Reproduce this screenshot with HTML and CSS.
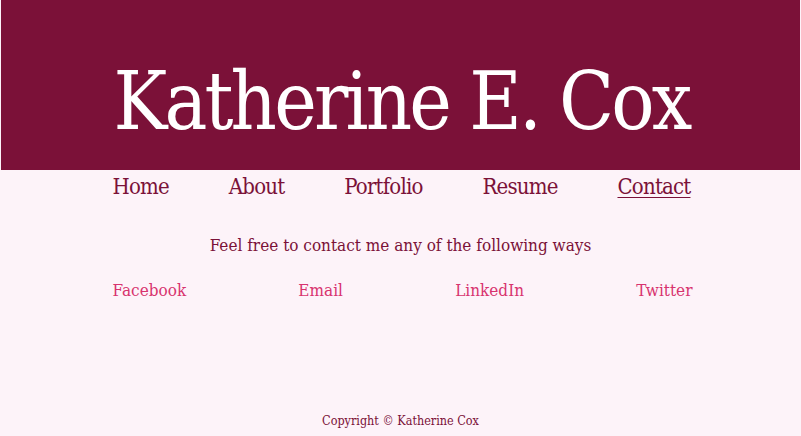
FILE: index.html
```html
<!DOCTYPE html>
<html lang="en">
<head>
<meta charset="utf-8">
<title>Contact - Katherine E. Cox</title>
<link rel="stylesheet" href="styles.css">
</head>
<body>
<header class="banner">
  <h1 class="name">Katherine E. Cox</h1>
</header>
<nav class="nav">
  <a href="#" class="nav-link">Home</a>
  <a href="#" class="nav-link">About</a>
  <a href="#" class="nav-link">Portfolio</a>
  <a href="#" class="nav-link">Resume</a>
  <a href="#" class="nav-link current">Contact</a>
</nav>
<main class="content">
  <p class="intro">Feel free to contact me any of the following ways</p>
  <div class="ways">
    <a href="#" class="way">Facebook</a>
    <a href="#" class="way">Email</a>
    <a href="#" class="way">LinkedIn</a>
    <a href="#" class="way">Twitter</a>
  </div>
</main>
<footer class="footer">Copyright © Katherine Cox</footer>
</body>
</html>
```
FILE: styles.css
```css
html, body {
  margin: 0;
  padding: 0;
}
body {
  background: #fdf3f9;
  color: #7b1138;
  font-family: "DejaVu Serif", serif;
  font-stretch: condensed;
  width: 801px;
  height: 436px;
  display: flex;
  flex-direction: column;
  overflow: hidden;
}
.banner {
  background: #7b1138;
  margin: 0 1px;
  height: 170px;
  display: flex;
  align-items: flex-end;
  justify-content: center;
}
.name {
  margin: 0 0 28px 2px;
  color: #fff;
  font-weight: normal;
  font-size: 80px;
  line-height: 1;
  letter-spacing: -2.8px;
}
.nav {
  width: 578px;
  margin: 0 auto;
  padding: 4px 0 0 2px;
  display: flex;
  justify-content: space-between;
}
.nav-link {
  color: #7b1138;
  text-decoration: none;
  font-size: 22px;
  letter-spacing: -0.8px;
}
.nav-link.current {
  text-decoration: underline;
  text-underline-offset: 3px;
  text-decoration-thickness: 1px;
}
.content {
  width: 580px;
  margin: 0 auto;
  flex: 1;
}
.intro {
  margin: 36px 0 0 0;
  text-align: center;
  font-size: 17px;
  letter-spacing: 0;
}
.ways {
  margin: 25px -2px 0 2px;
  display: flex;
  justify-content: space-between;
}
.way {
  color: #d8336f;
  text-decoration: none;
  font-size: 17px;
}
.footer {
  text-align: center;
  font-size: 12.5px;
  padding-bottom: 8px;
}
```
